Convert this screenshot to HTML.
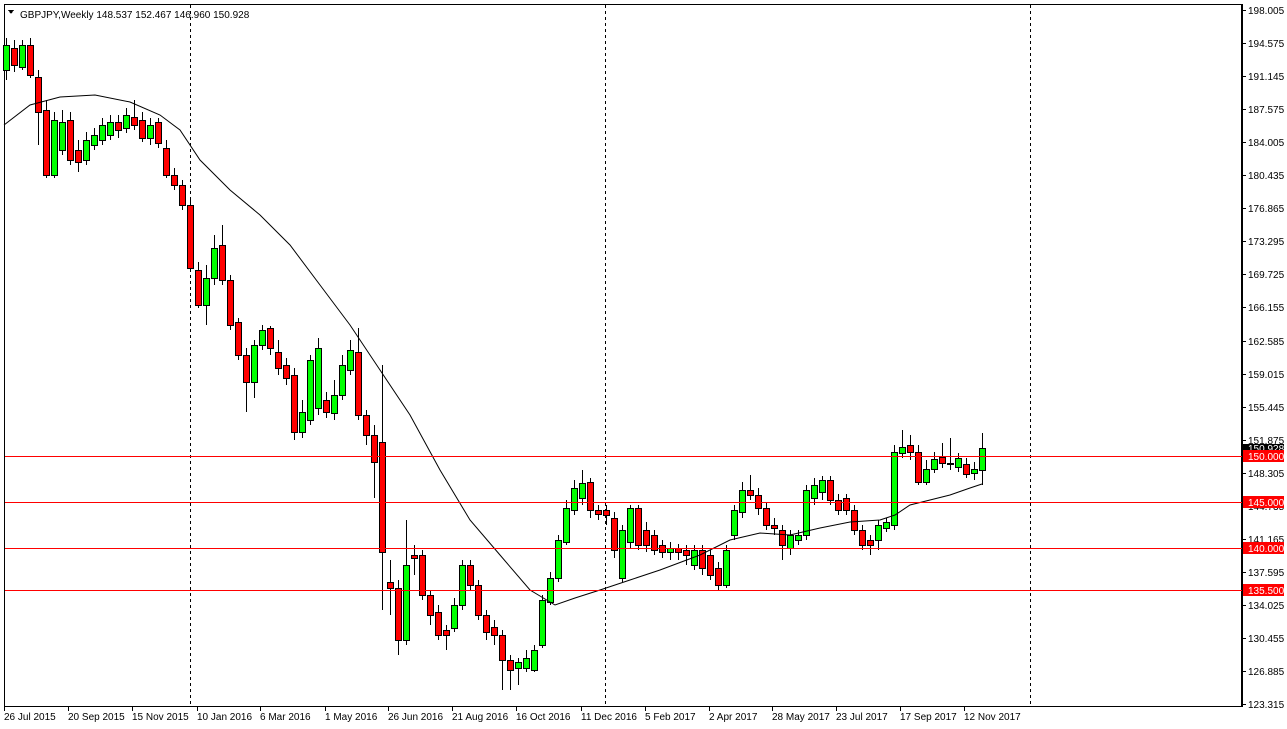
<!DOCTYPE html>
<html><head><meta charset="utf-8"><style>
html,body{margin:0;padding:0;background:#fff;width:1287px;height:729px;overflow:hidden}
svg{display:block;font-family:"Liberation Sans",sans-serif;font-size:10px}
</style></head><body>
<svg id="s" width="1287" height="729" viewBox="0 0 1287 729" xmlns="http://www.w3.org/2000/svg" shape-rendering="crispEdges">
<rect x="0" y="0" width="1287" height="729" fill="#fff"/>
<rect x="4.5" y="4.5" width="1237" height="702" fill="none" stroke="#000"/>
<line x1="1242.5" y1="4" x2="1242.5" y2="707" stroke="#000"/>
<g stroke="#000" stroke-dasharray="3,3">
<line x1="190.5" y1="5" x2="190.5" y2="706"/>
<line x1="605.5" y1="5" x2="605.5" y2="706"/>
<line x1="1030.5" y1="5" x2="1030.5" y2="706"/>
</g>
<g id="c"></g>
<polyline fill="none" stroke="#000" stroke-width="1" shape-rendering="auto" points="4,125 30,105 60,97 95,95 130,102 160,115 180,130 200,160 230,190 260,215 290,245 320,285 350,325 380,370 410,415 440,470 470,520 500,555 530,590 555,605 575,598 600,590 630,580 660,570 700,555 730,540 760,533 790,535 820,528 850,522 880,520 895,515 910,505 930,500 950,495 970,488 982,484"/>
<g stroke="#f00">
<line x1="5" y1="456.5" x2="1242" y2="456.5"/>
<line x1="5" y1="502.5" x2="1242" y2="502.5"/>
<line x1="5" y1="548.5" x2="1242" y2="548.5"/>
<line x1="5" y1="590.5" x2="1242" y2="590.5"/>
</g>
<g id="ax"></g>
<text x="20" y="18" fill="#000" font-size="10">GBPJPY,Weekly  148.537 152.467 146.960 150.928</text>
<polygon points="8,10 14,10 11,14" fill="#000"/>
</svg>
<script>
var d=[[45,70,38,80,1],[48,65,40,72,0],[45,67,40,70,1],[45,75,38,78,0],[77,112,70,145,0],[110,175,100,178,0],[120,175,112,178,1],[122,150,110,155,1],[120,160,112,165,0],[150,162,140,172,0],[140,160,132,165,1],[135,145,128,150,1],[125,140,118,145,1],[122,135,115,140,1],[122,130,115,138,0],[115,128,108,133,1],[117,125,100,130,0],[120,138,112,142,0],[125,138,118,145,1],[122,143,118,148,0],[148,175,140,178,0],[175,185,168,190,0],[185,205,180,210,0],[205,268,200,272,0],[270,305,262,308,0],[278,305,265,325,1],[248,278,235,285,1],[245,280,225,285,0],[280,325,275,330,0],[322,355,318,360,0],[355,382,348,412,0],[345,382,340,398,1],[330,345,325,350,1],[328,348,326,355,0],[352,368,340,375,0],[365,378,358,385,0],[375,432,368,440,0],[412,432,400,438,1],[360,420,355,425,1],[348,408,338,415,1],[400,412,392,418,0],[395,413,380,420,1],[365,395,355,400,1],[350,370,340,375,1],[352,415,328,420,0],[415,435,410,445,0],[435,462,425,498,0],[442,552,365,610,0],[582,588,560,615,0],[588,640,580,655,0],[565,640,520,645,1],[555,558,545,575,0],[555,595,550,600,0],[595,615,590,625,0],[612,635,605,640,0],[630,635,625,650,0],[605,628,598,632,1],[565,605,560,610,1],[565,585,560,590,0],[585,615,580,620,0],[615,632,610,640,0],[627,635,620,645,0],[635,660,630,690,0],[660,670,655,690,0],[662,668,658,685,1],[658,668,650,672,1],[650,670,645,672,1],[600,645,595,648,1],[578,602,572,605,1],[540,578,535,582,1],[508,542,500,545,1],[488,510,480,515,1],[483,498,470,505,1],[482,510,478,518,0],[510,514,505,520,0],[510,515,505,525,0],[518,550,512,558,0],[530,578,525,582,1],[508,542,505,548,1],[508,545,505,550,0],[530,545,522,552,0],[535,550,530,555,0],[545,552,540,558,0],[548,552,542,560,1],[548,552,544,560,0],[550,555,545,565,0],[550,565,545,570,1],[550,568,545,575,0],[555,575,550,580,0],[568,585,562,590,0],[550,585,545,588,1],[510,535,505,540,1],[490,512,482,518,1],[490,495,475,500,0],[495,508,488,515,0],[508,525,502,530,0],[525,528,518,535,0],[530,545,525,560,0],[535,548,530,555,1],[535,540,530,545,1],[490,535,485,540,1],[485,498,478,505,1],[480,492,476,500,1],[480,500,476,505,0],[500,510,494,515,0],[498,510,494,515,0],[510,530,505,535,0],[530,545,525,550,0],[540,545,535,555,0],[525,540,520,550,1],[522,528,518,532,1],[452,525,445,530,1],[447,453,430,458,1],[445,452,435,460,0],[452,482,445,485,0],[469,482,460,485,1],[459,469,452,473,1],[457,463,443,468,0],[463,463,438,470,1],[458,467,453,472,1],[464,474,458,478,0],[469,473,462,480,1],[448,470,433,485,1]];
var g='';
d.forEach(function(c,i){var x=6+8*i;g+='<line x1="'+(x+0.5)+'" y1="'+c[2]+'" x2="'+(x+0.5)+'" y2="'+c[3]+'" stroke="#000"/>';
var h=Math.max(1,c[1]-c[0]);g+='<rect x="'+(x-2.5)+'" y="'+(c[0]+0.5)+'" width="6" height="'+h+'" fill="'+(c[4]?'#00ff00':'#ff0000')+'" stroke="#000"/>';});
document.getElementById('c').innerHTML=g;
var L=['198.005','194.575','191.145','187.575','184.005','180.435','176.865','173.295','169.725','166.155','162.585','159.015','155.445','151.875','148.305','144.735','141.165','137.595','134.025','130.455','126.885','123.315'];
var a='';
L.forEach(function(t,i){var y=Math.round(10+i*33.05);a+='<line x1="1242" y1="'+(y+0.5)+'" x2="1246" y2="'+(y+0.5)+'" stroke="#000"/><text x="1248" y="'+(y+4)+'" fill="#000">'+t+'</text>';});
var D=[[4,'26 Jul 2015'],[68,'20 Sep 2015'],[132,'15 Nov 2015'],[197,'10 Jan 2016'],[260,'6 Mar 2016'],[325,'1 May 2016'],[388,'26 Jun 2016'],[452,'21 Aug 2016'],[516,'16 Oct 2016'],[581,'11 Dec 2016'],[645,'5 Feb 2017'],[709,'2 Apr 2017'],[772,'28 May 2017'],[836,'23 Jul 2017'],[900,'17 Sep 2017'],[964,'12 Nov 2017']];
D.forEach(function(p){a+='<line x1="'+(p[0]+0.5)+'" y1="707" x2="'+(p[0]+0.5)+'" y2="711" stroke="#000"/><text x="'+p[0]+'" y="720" fill="#000">'+p[1]+'</text>';});
a+='<rect x="1243" y="444" width="41" height="10" fill="#000"/><text x="1248" y="452" fill="#fff">150.928</text>';
[[456,'150.000'],[502,'145.000'],[548,'140.000'],[590,'135.500']].forEach(function(p){a+='<rect x="1243" y="'+(p[0]-6)+'" width="41" height="12" fill="#f00"/><text x="1248" y="'+(p[0]+4)+'" fill="#fff">'+p[1]+'</text>';});
document.getElementById('ax').innerHTML=a;
</script>
</body></html>
